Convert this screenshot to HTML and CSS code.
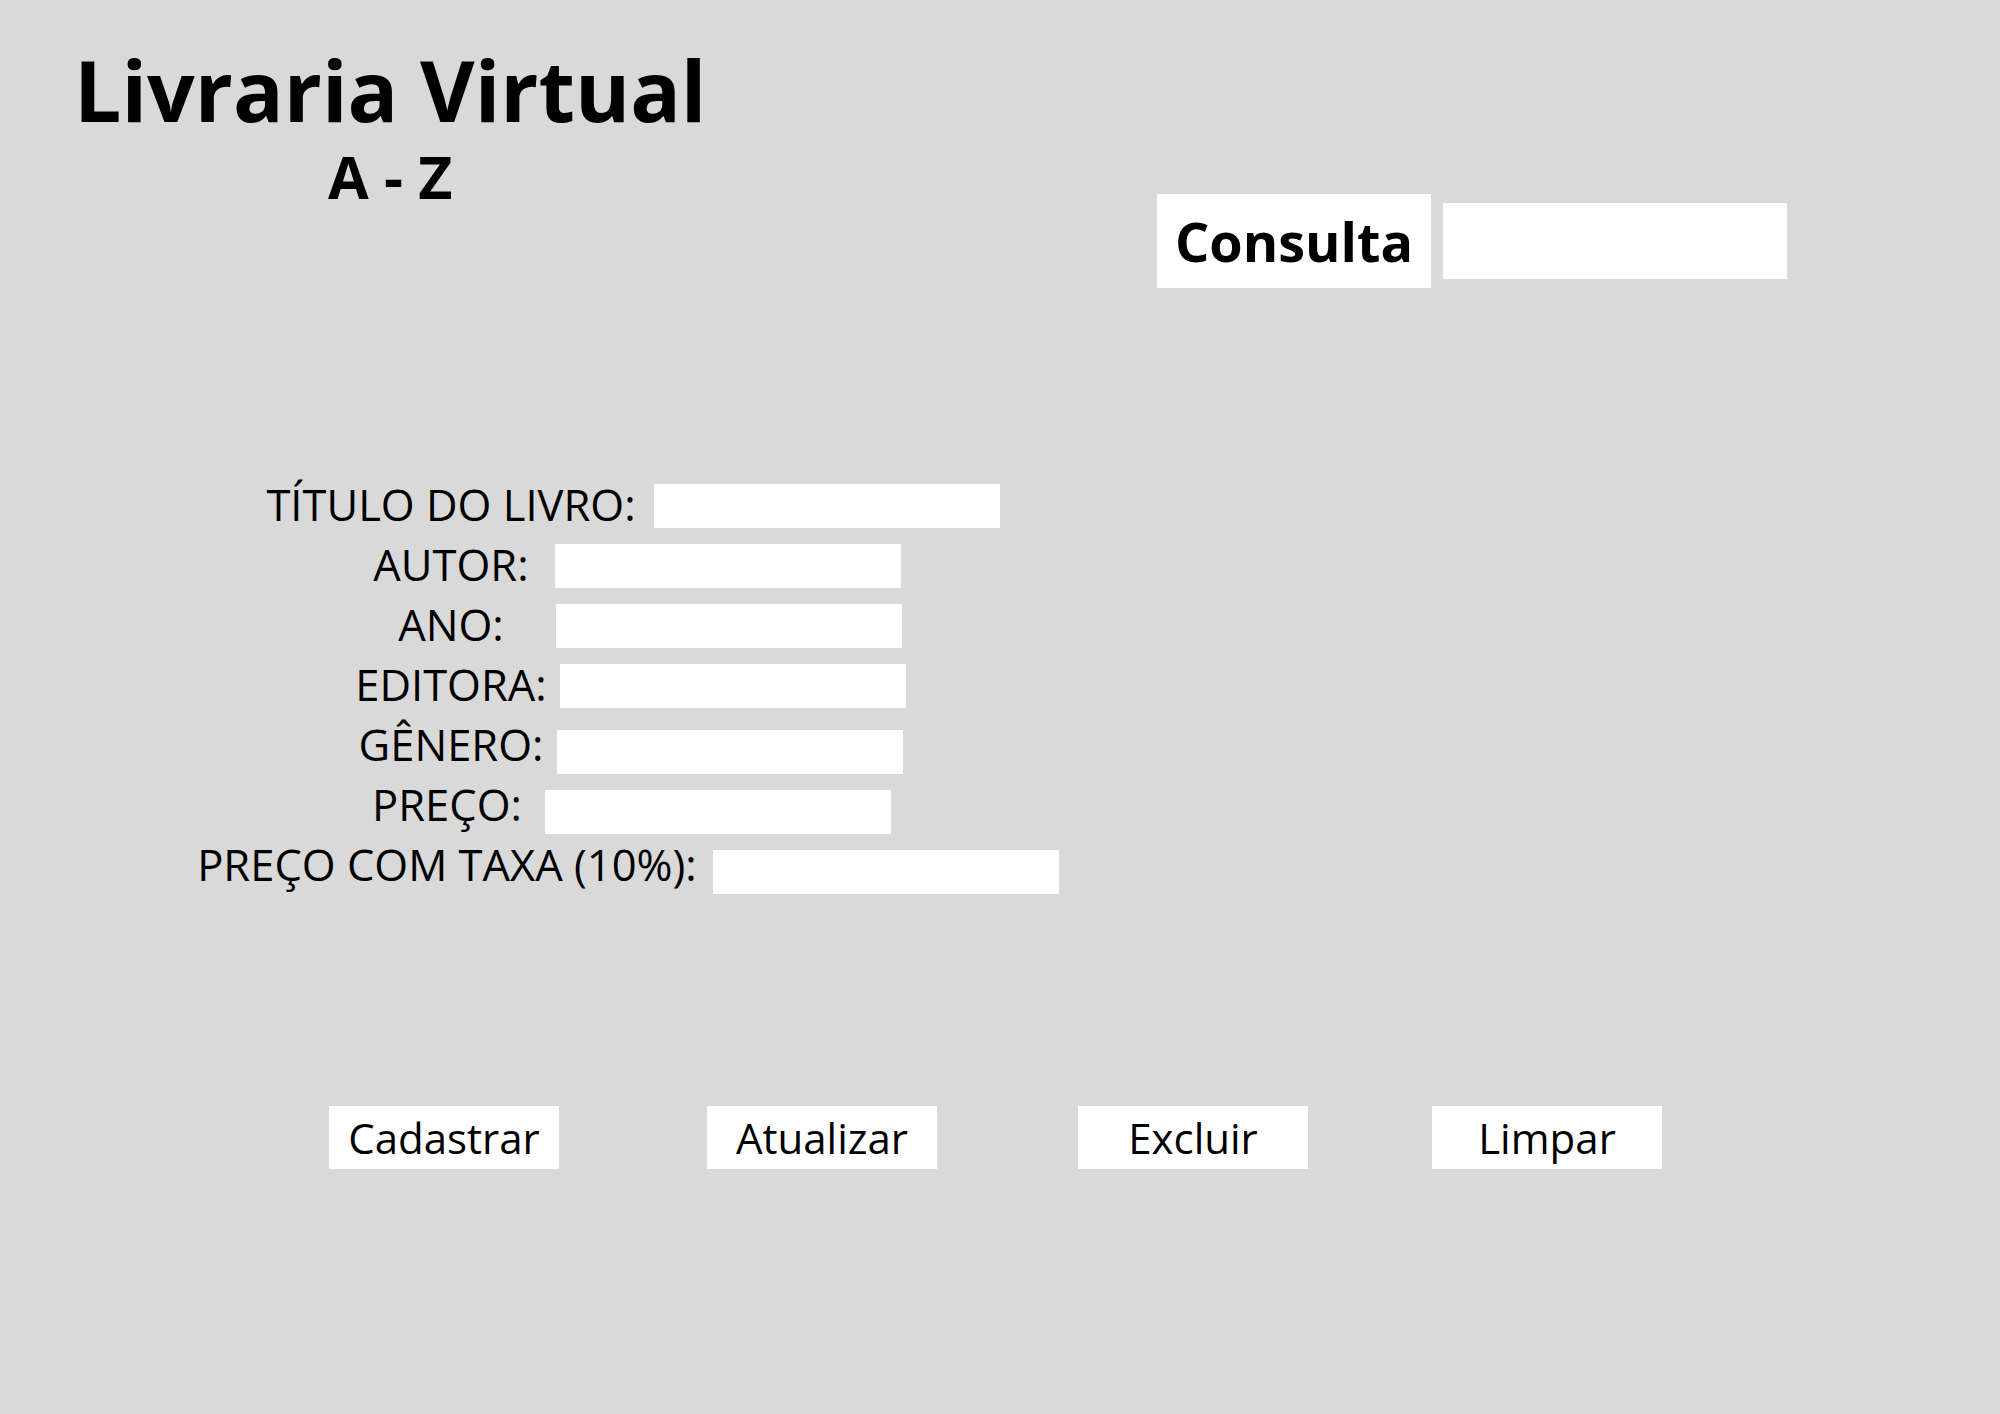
FILE: index.html
```html
<!DOCTYPE html>
<html lang="pt">
<head>
<meta charset="utf-8">
<title>Livraria Virtual A - Z</title>
<link rel="stylesheet" href="styles.css">
</head>
<body>
<header class="header">
  <div class="brand">
    <h1 class="brand-title">Livraria Virtual</h1>
    <div class="brand-sub">A - Z</div>
  </div>
  <div class="search">
    <div class="search-label">Consulta</div>
    <input class="search-input" type="text" aria-label="Consulta">
  </div>
</header>

<form class="form">
  <div class="row g1"><label class="label">TÍTULO DO LIVRO:</label><input class="field" type="text"></div>
  <div class="row g2"><label class="label">AUTOR:</label><input class="field" type="text"></div>
  <div class="row g3"><label class="label">ANO:</label><input class="field" type="text"></div>
  <div class="row g4"><label class="label">EDITORA:</label><input class="field" type="text"></div>
  <div class="row g5 low"><label class="label">GÊNERO:</label><input class="field" type="text"></div>
  <div class="row g6 low shift"><label class="label">PREÇO:</label><input class="field" type="text"></div>
  <div class="row g7 low shift"><label class="label">PREÇO COM TAXA (10%):</label><input class="field" type="text"></div>
</form>

<div class="actions">
  <button class="btn b1" type="button">Cadastrar</button>
  <button class="btn b2" type="button">Atualizar</button>
  <button class="btn b3" type="button">Excluir</button>
  <button class="btn b4" type="button">Limpar</button>
</div>
</body>
</html>
```

FILE: styles.css
```css
html, body {
  margin: 0;
  padding: 0;
}
body {
  background: #d9d9d9;
  color: #000;
  font-family: "Open Sans", "Noto Sans", sans-serif;
  width: 2000px;
  height: 1414px;
  overflow: hidden;
}

.header {
  display: flex;
  align-items: flex-start;
  padding: 40px 213px 0 74px;
}
.brand {
  display: flex;
  flex-direction: column;
  align-items: center;
}
.brand-title {
  margin: 0;
  font-size: 84px;
  font-weight: 700;
  line-height: 100px;
}
.brand-sub {
  margin-top: 2px;
  font-size: 59px;
  font-weight: 700;
  line-height: 68px;
}

.search {
  margin-left: auto;
  margin-top: 154px;
  display: flex;
  align-items: center;
}
.search-label {
  background: #fff;
  width: 274px;
  height: 94px;
  line-height: 94px;
  text-align: center;
  font-size: 54px;
  font-weight: 700;
}
.search-input {
  display: block;
  margin-left: 12px;
  width: 344px;
  height: 76px;
  border: 0;
  padding: 0;
  background: #fff;
  outline: none;
}

.form {
  margin-top: 186px;
}
.row {
  width: 902px;
  height: 60px;
  display: flex;
  justify-content: center;
  align-items: center;
  --gap: 18px;
}
.shift {
  width: 894px;
}
.label {
  font-size: 43.5px;
  line-height: 60px;
  white-space: nowrap;
  padding-top: 2px;
}
.field {
  display: block;
  width: 346px;
  height: 44px;
  border: 0;
  padding: 0;
  background: #fff;
  outline: none;
  margin-top: 4px;
  margin-left: var(--gap);
  margin-right: calc(-346px - var(--gap));
}
.low .field {
  margin-top: 15px;
}
.g1 { --gap: 18px; }
.g2 { --gap: 26px; }
.g3 { --gap: 52px; }
.g4 { --gap: 13px; }
.g5 { --gap: 14px; }
.g6 { --gap: 23px; }
.g7 { --gap: 16px; }

.actions {
  display: flex;
  margin-top: 212px;
  padding-left: 329px;
}
.btn {
  width: 230px;
  height: 63px;
  border: 0;
  padding: 0;
  background: #fff;
  color: #000;
  font-family: "Open Sans", "Noto Sans", sans-serif;
  font-size: 42px;
  line-height: 63px;
  text-align: center;
}
.b2 { margin-left: 148px; }
.b3 { margin-left: 141px; }
.b4 { margin-left: 124px; }
```
